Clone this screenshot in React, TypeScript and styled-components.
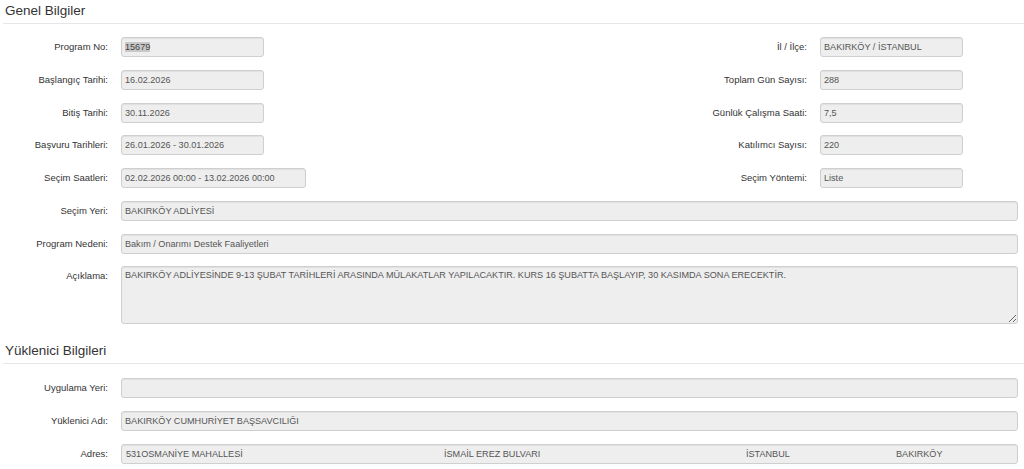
import React from "react";
import styled, { createGlobalStyle } from "styled-components";

const Global = createGlobalStyle`
  html, body { margin: 0; padding: 0; background: #fff; overflow: hidden; }
  body { font-family: "Liberation Sans", Arial, sans-serif; color: #333; }
`;

const Page = styled.div`
  width: 1024px;
`;

const SectionTitle = styled.h2<{ $top?: number }>`
  margin: ${(p) => p.$top ?? 0}px 0 0 3px;
  padding: 3px 2px 4px;
  font-size: 13.5px;
  line-height: 16px;
  font-weight: normal;
  color: #333;
  border-bottom: 1px solid #e6e6e6;
`;

const Form = styled.div<{ $pt: number }>`
  display: flex;
  flex-direction: column;
  gap: 12.75px;
  padding-top: ${(p) => p.$pt}px;
`;

const PairRow = styled.div`
  display: flex;
  justify-content: space-between;
  padding-right: 61px;
`;

const FullRow = styled.div`
  display: flex;
  padding-right: 6px;
`;

const Field = styled.div<{ $grow?: boolean }>`
  display: flex;
  align-items: flex-start;
  gap: 13px;
  ${(p) => (p.$grow ? "flex: 1;" : "")}
`;

const Label = styled.label<{ $w?: number }>`
  ${(p) => (p.$w ? `width: ${p.$w}px;` : "")}
  flex: none;
  text-align: right;
  font-size: 9.5px;
  line-height: 20px;
  color: #333;
  white-space: nowrap;
`;

const Box = styled.div<{ $w?: number }>`
  box-sizing: border-box;
  ${(p) => (p.$w ? `width: ${p.$w}px;` : "flex: 1;")}
  height: 20px;
  padding: 0 3px;
  background: #eeeeee;
  border: 1px solid #cfcfcf;
  border-radius: 3px;
  box-shadow: inset 0 1px 1px rgba(0, 0, 0, 0.06);
  font-size: 9.1px;
  line-height: 18px;
  color: #555;
  white-space: nowrap;
  overflow: hidden;
`;

const Area = styled.textarea`
  box-sizing: border-box;
  flex: 1;
  height: 58px;
  margin: 0;
  padding: 1px 3px;
  background: #eeeeee;
  border: 1px solid #cfcfcf;
  border-radius: 3px;
  box-shadow: inset 0 1px 1px rgba(0, 0, 0, 0.06);
  font-family: "Liberation Sans", Arial, sans-serif;
  font-size: 9.1px;
  line-height: 14px;
  color: #555;
  resize: vertical;
  outline: none;
`;

const Selected = styled.span`
  background: #c8c8c8;
  color: #444;
`;

const AddressBox = styled(Box)`
  display: grid;
  grid-template-columns: 318px 302px 150px 1fr;
  padding: 0 0 0 3px;
`;

const Cell = styled.span`
  padding-left: 1px;
  overflow: hidden;
`;

type PairProps = { label: string; children: React.ReactNode; w?: number; lw?: number };

const Pair = ({ label, children, w = 143, lw }: PairProps) => (
  <Field>
    <Label $w={lw}>{label}</Label>
    <Box $w={w}>{children}</Box>
  </Field>
);

const Full = ({ label, children }: { label: string; children: React.ReactNode }) => (
  <FullRow>
    <Field $grow>
      <Label $w={108}>{label}</Label>
      {children}
    </Field>
  </FullRow>
);

export default function App() {
  return (
    <Page>
      <Global />
      <SectionTitle>Genel Bilgiler</SectionTitle>
      <Form $pt={13}>
        <PairRow>
          <Pair label="Program No:" lw={108}>
            <Selected>15679</Selected>
          </Pair>
          <Pair label="İl / İlçe:">BAKIRKÖY / İSTANBUL</Pair>
        </PairRow>
        <PairRow>
          <Pair label="Başlangıç Tarihi:" lw={108}>16.02.2026</Pair>
          <Pair label="Toplam Gün Sayısı:">288</Pair>
        </PairRow>
        <PairRow>
          <Pair label="Bitiş Tarihi:" lw={108}>30.11.2026</Pair>
          <Pair label="Günlük Çalışma Saati:">7,5</Pair>
        </PairRow>
        <PairRow>
          <Pair label="Başvuru Tarihleri:" lw={108}>26.01.2026 - 30.01.2026</Pair>
          <Pair label="Katılımcı Sayısı:">220</Pair>
        </PairRow>
        <PairRow>
          <Pair label="Seçim Saatleri:" lw={108} w={185}>
            02.02.2026 00:00 - 13.02.2026 00:00
          </Pair>
          <Pair label="Seçim Yöntemi:">Liste</Pair>
        </PairRow>
        <Full label="Seçim Yeri:">
          <Box>BAKIRKÖY ADLİYESİ</Box>
        </Full>
        <Full label="Program Nedeni:">
          <Box>Bakım / Onarımı Destek Faaliyetleri</Box>
        </Full>
        <Full label="Açıklama:">
          <Area
            readOnly
            value="BAKIRKÖY ADLİYESİNDE 9-13 ŞUBAT TARİHLERİ ARASINDA MÜLAKATLAR YAPILACAKTIR. KURS 16 ŞUBATTA BAŞLAYIP, 30 KASIMDA SONA ERECEKTİR."
          />
        </Full>
      </Form>

      <SectionTitle $top={16}>Yüklenici Bilgileri</SectionTitle>
      <Form $pt={14}>
        <Full label="Uygulama Yeri:">
          <Box />
        </Full>
        <Full label="Yüklenici Adı:">
          <Box>BAKIRKÖY CUMHURİYET BAŞSAVCILIĞI</Box>
        </Full>
        <Full label="Adres:">
          <AddressBox>
            <Cell>531OSMANİYE MAHALLESİ</Cell>
            <Cell>İSMAİL EREZ BULVARI</Cell>
            <Cell>İSTANBUL</Cell>
            <Cell>BAKIRKÖY</Cell>
          </AddressBox>
        </Full>
      </Form>
    </Page>
  );
}
